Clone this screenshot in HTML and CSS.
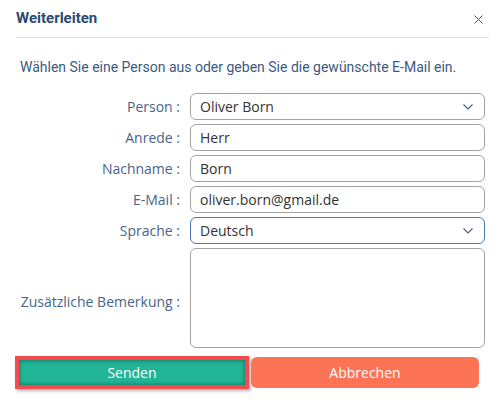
FILE: index.html
```html
<!DOCTYPE html>
<html lang="de">
<head>
<meta charset="utf-8">
<title>Weiterleiten</title>
<link rel="stylesheet" href="styles.css">
</head>
<body>
<div class="dialog">
  <div class="header">
    <h1 class="title">Weiterleiten</h1>
    <span class="close">
      <svg width="9" height="9" viewBox="0 0 9 9"><path d="M0.5 0.5 L8.5 8.5 M8.5 0.5 L0.5 8.5" stroke="#555" stroke-width="1" fill="none"/></svg>
    </span>
  </div>
  <p class="intro">Wählen Sie eine Person aus oder geben Sie die gewünschte E-Mail ein.</p>
  <div class="form">
    <label class="label">Person :</label>
    <div class="field select">
      <span class="value">Oliver Born</span>
      <svg class="chev" width="10" height="6" viewBox="0 0 10 6"><path d="M0.5 0.5 L5 5 L9.5 0.5" stroke="#3d5f8a" stroke-width="1.1" fill="none"/></svg>
    </div>
    <label class="label">Anrede :</label>
    <div class="field"><span class="value">Herr</span></div>
    <label class="label">Nachname :</label>
    <div class="field"><span class="value">Born</span></div>
    <label class="label">E-Mail :</label>
    <div class="field"><span class="value">oliver.born@gmail.de</span></div>
    <label class="label">Sprache :</label>
    <div class="field select focus">
      <span class="value">Deutsch</span>
      <svg class="chev" width="10" height="6" viewBox="0 0 10 6"><path d="M0.5 0.5 L5 5 L9.5 0.5" stroke="#3d5f8a" stroke-width="1.1" fill="none"/></svg>
    </div>
    <label class="label label-area">Zusätzliche Bemerkung :</label>
    <div class="field area"></div>
  </div>
  <div class="buttons">
    <button class="btn send">Senden</button>
    <button class="btn cancel">Abbrechen</button>
  </div>
</div>
</body>
</html>
```
FILE: styles.css
```css
html, body {
  margin: 0;
  padding: 0;
  background: #ffffff;
}
.dialog {
  width: 503px;
  height: 407px;
  box-sizing: border-box;
  font-family: "Open Sans", "Liberation Sans", sans-serif;
}
.header {
  margin: 0 14px 0 16px;
  height: 38px;
  box-sizing: border-box;
  border-bottom: 1px solid #e2e2e2;
  display: flex;
  align-items: center;
  justify-content: space-between;
  padding-bottom: 1px;
}
.title {
  margin: 0;
  font-family: Roboto, "Liberation Sans", sans-serif;
  font-weight: 700;
  font-size: 15px;
  color: #2b4a70;
  line-height: 20px;
}
.close {
  display: flex;
  margin-right: 6px;
  margin-top: 2px;
}
.intro {
  margin: 19px 0 0 20px;
  font-family: Roboto, "Liberation Sans", sans-serif;
  font-size: 14px;
  line-height: 20px;
  color: #3b5a82;
}
.form {
  margin-top: 16px;
  padding: 0 18px 0 16px;
  display: grid;
  grid-template-columns: 164px 1fr;
  column-gap: 10px;
  row-gap: 4px;
}
.label {
  text-align: right;
  font-family: "Open Sans", "Liberation Sans", sans-serif;
  font-size: 14px;
  color: #48648a;
  align-self: center;
  white-space: nowrap;
}
.label-area {
  padding-top: 6px;
}
.field {
  height: 27px;
  box-sizing: border-box;
  border: 1px solid #a3a3a3;
  border-radius: 6px;
  display: flex;
  align-items: center;
  justify-content: space-between;
  padding: 0 11px 0 9px;
  font-size: 14px;
  color: #333333;
}
.field.focus {
  border-color: #4a78ad;
}
.field.area {
  height: 100px;
}
.chev {
  margin-top: 1px;
}
.buttons {
  margin-top: 8px;
  padding-left: 15px;
  display: flex;
  align-items: center;
  gap: 2px;
}
.btn {
  font-family: "Open Sans", "Liberation Sans", sans-serif;
  font-size: 14px;
  color: #ffffff;
  border: none;
  padding: 0;
  cursor: pointer;
}
.send {
  width: 234px;
  height: 33px;
  background: #21b496;
  border: 4px solid #f44b4c;
  box-shadow: 2px 2px 3px rgba(0, 0, 0, 0.3), inset 0 0 4px rgba(0, 0, 0, 0.45);
}
.cancel {
  width: 228px;
  height: 31px;
  background: #fd7356;
  border-radius: 6px;
}
```
